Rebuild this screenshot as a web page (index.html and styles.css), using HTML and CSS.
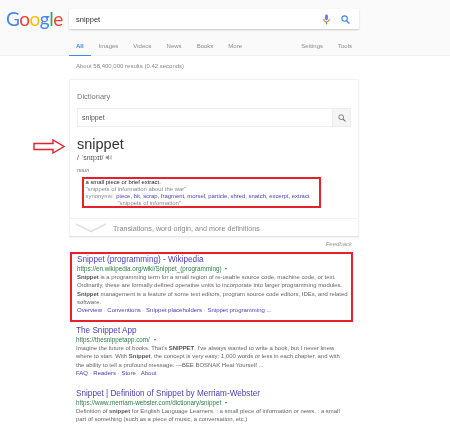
FILE: index.html
```html
<!DOCTYPE html>
<html lang="en">
<head>
  <meta charset="UTF-8" />
  <title>snippet - Google Search</title>
  <link rel="stylesheet" href="styles.css">
</head>
<body>

<header class="top">
  <div class="top-row">
    <div class="logo"><span class="c-blue">G</span><span class="c-red">o</span><span class="c-yellow">o</span><span class="c-blue">g</span><span class="c-green">l</span><span class="c-red">e</span></div>
    <div class="searchbox">
      <span class="query">snippet</span>
      <svg class="mic" viewBox="0 0 10 14" width="7" height="11">
        <rect x="3" y="0" width="4" height="8" rx="2" fill="#4285f4"/>
        <path d="M1 6.500a4 4 0 0 0 8 0" fill="none" stroke="#ea4335" stroke-width="1.300"/>
        <rect x="4.200" y="10.500" width="1.600" height="3.500" fill="#34a853"/>
        <rect x="1" y="6" width="1.200" height="2.500" fill="#fbbc05"/>
      </svg>
      <svg class="lens" viewBox="0 0 12 12" width="9" height="9">
        <circle cx="4.800" cy="4.800" r="3.600" fill="none" stroke="#4285f4" stroke-width="1.500"/>
        <path d="M7.600 7.600l3.600 3.600" stroke="#4285f4" stroke-width="1.800"/>
      </svg>
    </div>
  </div>
  <nav class="tabs">
    <a class="tab active">All</a>
    <a class="tab">Images</a>
    <a class="tab">Videos</a>
    <a class="tab">News</a>
    <a class="tab">Books</a>
    <a class="tab">More</a>
    <a class="tab settings">Settings</a>
    <a class="tab">Tools</a>
  </nav>
</header>

<main class="content">
  <div class="stats">About 58,400,000 results (0.42 seconds)</div>

  <section class="dict-card">
    <div class="dict-label">Dictionary</div>
    <div class="dict-search">
      <span class="dict-query">snippet</span>
      <span class="dict-btn">
        <svg viewBox="0 0 12 12" width="8" height="8">
          <circle cx="4.800" cy="4.800" r="3.600" fill="none" stroke="#777" stroke-width="1.400"/>
          <path d="M7.600 7.600l3.600 3.600" stroke="#777" stroke-width="1.700"/>
        </svg>
      </span>
    </div>

    <!-- big red arrow pointing at the word -->
    <svg class="arrow" viewBox="0 0 33 15" width="33" height="15">
      <path d="M1 4.500h19V1l11 6.500L20 14v-3.500H1z" fill="#fff" stroke="#e8202a" stroke-width="1.400"/>
    </svg>

    <div class="word">snippet</div>
    <div class="phonetic">/ ˈsnɪpɪt/
      <svg viewBox="0 0 10 10" width="7" height="7">
        <path d="M1 3.500h2l2.500-2.500v8l-2.500-2.500h-2z" fill="#888"/>
        <path d="M7 3a3 3 0 0 1 0 4M8.300 1.800a5 5 0 0 1 0 6.400" fill="none" stroke="#888" stroke-width=".8"/>
      </svg>
    </div>
    <div class="pos">noun</div>

    <div class="def-box">
      <div class="def-line def-main">a small piece or brief extract.</div>
      <div class="def-line quote">"snippets of information about the war"</div>
      <div class="def-line syn-row">
        <span class="syn-label">synonyms:</span>
        <a>piece, bit, scrap, fragment, morsel, particle, shred, snatch, excerpt, extract</a>
      </div>
      <div class="def-line quote syn-quote">"snippets of information"</div>
    </div>

    <div class="more-defs">
      <svg viewBox="0 0 30 10" width="30" height="10">
        <path d="M0 1l15 7.500L30 1" fill="none" stroke="#e3e3e3" stroke-width="1.800"/>
      </svg>
      <span>Translations, word origin, and more definitions</span>
    </div>
  </section>
  <div class="feedback">Feedback</div>

  <div class="result boxed">
    <a class="r-title">Snippet (programming) - Wikipedia</a>
    <div class="r-url">https://en.wikipedia.org/wiki/Snippet_(programming) <i class="caret"></i></div>
    <p class="r-text"><b>Snippet</b> is a programming term for a small region of re-usable source code, machine code, or text. Ordinarily, these are formally defined operative units to incorporate into larger programming modules. <b>Snippet</b> management is a feature of some text editors, program source code editors, IDEs, and related software.</p>
    <div class="r-links"><a>Overview</a> · <a>Conventions</a> · <a>Snippet placeholders</a> · <a>Snippet programming ...</a></div>
  </div>

  <div class="result">
    <a class="r-title">The Snippet App</a>
    <div class="r-url">https://thesnippetapp.com/ <i class="caret"></i></div>
    <p class="r-text">Imagine the future of books. That's <b>SNIPPET</b>. I've always wanted to write a book, but I never knew where to start. With <b>Snippet</b>, the concept is very easy: 1,000 words or less in each chapter, and with the ability to tell a profound message. —BEE BOSNAK Heal Yourself ...</p>
    <div class="r-links"><a>FAQ</a> · <a>Readers</a> · <a>Store</a> · <a>About</a></div>
  </div>

  <div class="result">
    <a class="r-title">Snippet | Definition of Snippet by Merriam-Webster</a>
    <div class="r-url">https://www.merriam-webster.com/dictionary/snippet <i class="caret"></i></div>
    <p class="r-text">Definition of <b>snippet</b> for English Language Learners. : a small piece of information or news. : a small part of something (such as a piece of music, a conversation, etc.)</p>
  </div>
</main>

</body>
</html>
```

FILE: styles.css
```css
* {
  box-sizing: border-box;
}

html, body {
  height: 100%;
}

body {
  margin: 0;
  overflow: hidden;
  background: #fff;
  color: #545454;
  font-family: "Liberation Sans", Arial, sans-serif;
  font-size: 6px;
}

a {
  color: #4b3fb3;
}

/* header */
.top {
  height: 56px;
  background: #fafafa;
  border-bottom: 1px solid #f0f0f0;
  filter: blur(0.4px);
}

.top-row {
  display: flex;
  align-items: center;
  padding-top: 9px;
}

.logo {
  width: 69px;
  height: 20px;
  padding-left: 6px;
  font-family: Lato, sans-serif;
  font-size: 19px;
  line-height: 20px;
  letter-spacing: -0.5px;
}

.c-blue { color: #4285f4; }
.c-red { color: #ea4335; }
.c-yellow { color: #fbbc05; }
.c-green { color: #34a853; }

.searchbox {
  display: flex;
  align-items: center;
  width: 290px;
  height: 20px;
  padding: 0 9px 0 7px;
  background: #fff;
  border-radius: 1px;
  box-shadow: 0 1px 2px rgba(0,0,0,0.2);
}

.query {
  flex: 1;
  font-size: 7.500px;
  color: #333;
}

.mic {
  margin-right: 11px;
}

.tabs {
  display: flex;
  width: 360px;
  margin-top: 12px;
  padding-left: 69px;
}

.tab {
  height: 15px;
  padding: 0 7px;
  margin-right: 1px;
  color: #8a8a8a;
  line-height: 11px;
}

.tab.active {
  color: #4285f4;
  font-weight: bold;
  border-bottom: 1.500px solid #4285f4;
}

.settings {
  margin-left: auto;
}

/* main column */
.content {
  width: 290px;
  margin-left: 69px;
  filter: blur(0.4px);
}

.stats {
  height: 23px;
  padding: 6px 0 0 7px;
  color: #8a8a8a;
  line-height: 8px;
}

.dict-card {
  position: relative;
  height: 158px;
  padding: 0 7px;
  background: #fff;
  border: 1px solid #f2f2f2;
  border-bottom-color: #e4e4e4;
  box-shadow: 0 1px 2px rgba(0,0,0,0.06);
}

.dict-label {
  padding-top: 12px;
  height: 28px;
  color: #777;
  font-size: 7.500px;
  line-height: 9px;
}

.dict-search {
  display: flex;
  align-items: center;
  height: 19px;
  padding-left: 4px;
  border: 1px solid #eee;
  color: #555;
  font-size: 7px;
}

.dict-query {
  flex: 1;
}

.dict-btn {
  display: flex;
  align-items: center;
  justify-content: center;
  width: 18px;
  height: 17px;
  background: #f5f5f5;
  border-left: 1px solid #eee;
}

.arrow {
  position: absolute;
  left: -37px;
  top: 59px;
}

.word {
  margin-top: 9px;
  color: #333;
  font-size: 14.500px;
  line-height: 17px;
}

.phonetic {
  display: flex;
  align-items: center;
  gap: 2px;
  height: 9px;
  color: #555;
  font-size: 7px;
}

.pos {
  margin-top: 5px;
  height: 7px;
  color: #777;
  font-style: italic;
  font-size: 5.500px;
  line-height: 7px;
}

.def-box {
  width: 239px;
  height: 31px;
  margin: 3px 0 0 5px;
  padding: 0 0 0 1.500px;
  border: 2px solid #e8202a;
}

.def-line {
  height: 7px;
  font-size: 5.900px;
  line-height: 7px;
  white-space: nowrap;
}

.def-main {
  color: #222;
}

.quote,
.syn-label {
  color: #8a8a8a;
}

.syn-row a {
  margin-left: 1px;
}

.syn-quote {
  padding-left: 32px;
}

.more-defs {
  display: flex;
  align-items: center;
  gap: 7px;
  height: 19px;
  margin: 10px -7px 0;
  padding-left: 6px;
  border-top: 1px solid #f3f3f3;
  color: #8a8a8a;
  font-size: 7.200px;
}

.feedback {
  height: 15px;
  padding: 3px 7px 0 0;
  color: #999;
  font-style: italic;
  line-height: 8px;
  text-align: right;
}

/* results */
.result {
  width: 272px;
  margin: 0 0 12px 7px;
  line-height: 8.300px;
}

.result.boxed {
  width: 283px;
  height: 70px;
  margin: 0 0 4px 1px;
  padding: 1px 2px 0 5px;
  border: 2px solid #e8202a;
}

.r-title {
  display: block;
  height: 9.500px;
  font-size: 8.200px;
  line-height: 9.500px;
}

.r-url {
  height: 8.500px;
  color: #2f7d46;
  font-size: 6.300px;
}

.caret {
  display: inline-block;
  margin: 0 0 1px 2px;
  border: 1.500px solid transparent;
  border-top: 2px solid #2f7d46;
  border-bottom: 0;
}

.r-text {
  margin: 0;
  color: #666;
  font-size: 5.950px;
}

.r-text b {
  color: #555;
}

.r-links {
  color: #888;
}

.r-links a {
  color: #4b3fb3;
}
```
